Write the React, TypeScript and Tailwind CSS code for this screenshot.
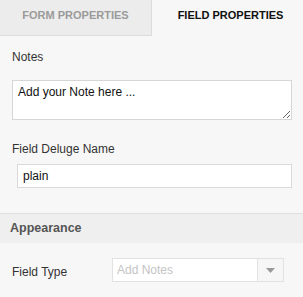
export default function App() {
  return (
    <div
      className="w-[303px] h-[297px] overflow-hidden bg-[#f7f7f7] text-[#333]"
      style={{ fontFamily: '"Liberation Sans", Arial, sans-serif' }}
    >
      {/* Tabs */}
      <div className="flex h-[36px]">
        <div className="w-[152px] border-r border-b border-[#dcdcdc] bg-[#ececec] flex justify-center pt-[8px]">
          <span className="text-[11px] font-bold leading-[14px] text-[#9a9a9a]">FORM PROPERTIES</span>
        </div>
        <div className="flex-1 flex justify-center pt-[8px]">
          <span className="text-[11px] font-bold leading-[14px] text-[#111] pl-[6px]">FIELD PROPERTIES</span>
        </div>
      </div>

      <div className="px-3">
        <div className="mt-[14px] text-[12px] leading-[14px] text-[#333]">Notes</div>
        <textarea
          defaultValue="Add your Note here ..."
          className="mt-[16px] block w-[280px] h-[40px] border border-[#d6d6d6] bg-white px-[5px] py-[4px] text-[12px] leading-[15px] text-[#111] outline-none"
        />
        <div className="mt-[22px] text-[12px] leading-[14px] text-[#333]">Field Deluge Name</div>
        <input
          defaultValue="plain"
          className="mt-[8px] ml-[5px] block w-[275px] h-[24px] border border-[#d9d9d9] bg-white px-[5px] text-[12px] text-[#111] outline-none"
        />
      </div>

      {/* Appearance */}
      <div className="mt-[25px] h-[30px] border-t border-[#e0e0e0] bg-[#efefef] flex items-center px-[10px]">
        <span className="text-[12.5px] font-bold text-[#555]">Appearance</span>
      </div>

      <div className="mt-[15px] flex items-center px-3">
        <span className="w-[100px] text-[12px] text-[#333] pt-[3px]">Field Type</span>
        <div className="flex w-[172px] h-[24px] border border-[#e2e2e2] bg-white">
          <span className="flex-1 px-[4px] text-[12px] leading-[22px] text-[#c4c4c4]">Add Notes</span>
          <span className="w-[26px] border-l border-[#e2e2e2] bg-[#f6f6f6] flex items-center justify-center">
            <svg width="9" height="5" viewBox="0 0 9 5">
              <path d="M0 0h9L4.5 5z" fill="#999" />
            </svg>
          </span>
        </div>
      </div>
    </div>
  )
}
